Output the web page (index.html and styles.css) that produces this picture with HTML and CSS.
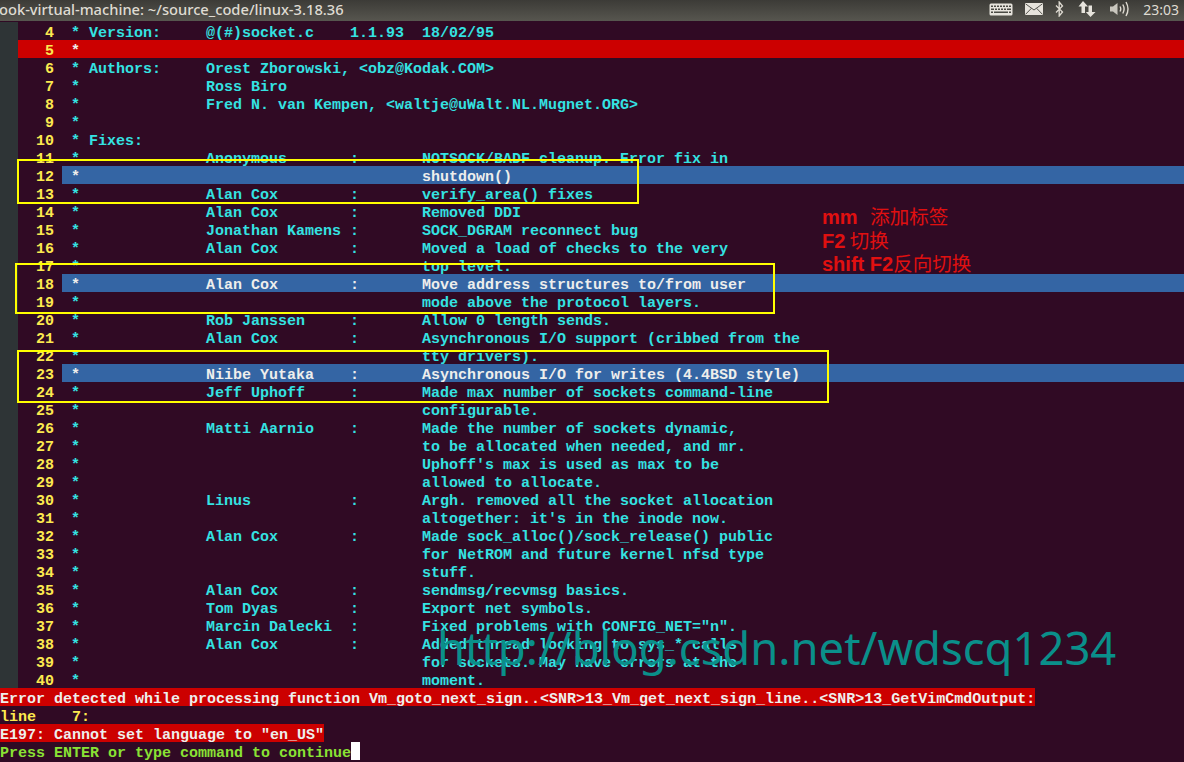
FILE: index.html
```html
<!DOCTYPE html>
<html lang="en">
<head>
<meta charset="utf-8">
<title>vim</title>
<link rel="stylesheet" href="styles.css">
</head>
<body>
<header class="topbar">
  <div class="title">ook-virtual-machine: ~/source_code/linux-3.18.36</div>
  <div class="tray">
    <svg class="ico" width="24" height="13" viewBox="0 0 24 13"><rect x="0.5" y="0.5" width="23" height="12" rx="1.5" fill="#e6e3dc"/><g fill="#4a4a44"><rect x="2" y="2.5" width="2" height="1.5"/><rect x="5" y="2.5" width="2" height="1.5"/><rect x="8" y="2.5" width="2" height="1.5"/><rect x="11" y="2.5" width="2" height="1.5"/><rect x="14" y="2.5" width="2" height="1.5"/><rect x="17" y="2.5" width="2" height="1.5"/><rect x="20" y="2.5" width="2" height="1.5"/><rect x="2" y="5.5" width="3" height="1.5"/><rect x="6" y="5.5" width="2" height="1.5"/><rect x="9" y="5.5" width="2" height="1.5"/><rect x="12" y="5.5" width="2" height="1.5"/><rect x="15" y="5.5" width="2" height="1.5"/><rect x="18" y="5.5" width="4" height="1.5"/><rect x="2" y="8.5" width="2" height="1.5"/><rect x="5" y="8.5" width="14" height="1.5"/><rect x="20" y="8.5" width="2" height="1.5"/></g></svg>
    <svg class="ico mail" width="18" height="12" viewBox="0 0 18 12"><rect x="0" y="0" width="18" height="12" fill="#e6e3dc"/><path d="M0.5 0.8 L9 7 L17.5 0.8 M0.5 11.4 L6.5 5.2 M17.5 11.4 L11.5 5.2" fill="none" stroke="#55544e" stroke-width="1"/></svg>
    <svg class="ico bt" width="9" height="16" viewBox="0 0 9 16"><path d="M1 4.5 L7.5 11 L4.2 15 V1 L7.5 5 L1 11.5" fill="none" stroke="#dfdbd2" stroke-width="1.3"/></svg>
    <svg class="ico net" width="18" height="16" viewBox="0 0 18 16"><path d="M5 0 L10 5.5 H7 V12 H3.5 V5.5 H0.5 Z M10.5 4.5 H14 V11 H17.5 L12.5 16 L7.8 11 H10.5 Z" fill="#e6e3dc"/></svg>
    <svg class="ico vol" width="20" height="16" viewBox="0 0 20 16"><path d="M0 5.5 H3 L7.5 2 V14 L3 10.5 H0 Z" fill="#c9c6be"/><path d="M10 5.5 Q11.5 8 10 10.5 M12.8 3.5 Q15.4 8 12.8 12.5 M16 1 Q20 8 16 15" fill="none" stroke="#dfdbd2" stroke-width="1.4"/></svg>
    <span class="clock">23:03</span>
  </div>
</header>

<main class="editor">
  <div class="row"><span class="sign"></span><span class="num">4</span><span class="code"> * Version:     @(#)socket.c    1.1.93  18/02/95</span></div>
  <div class="row red"><span class="sign"></span><span class="num">5</span><span class="code"> *</span></div>
  <div class="row"><span class="sign"></span><span class="num">6</span><span class="code"> * Authors:     Orest Zborowski, &lt;obz@Kodak.COM&gt;</span></div>
  <div class="row"><span class="sign"></span><span class="num">7</span><span class="code"> *              Ross Biro</span></div>
  <div class="row"><span class="sign"></span><span class="num">8</span><span class="code"> *              Fred N. van Kempen, &lt;waltje@uWalt.NL.Mugnet.ORG&gt;</span></div>
  <div class="row"><span class="sign"></span><span class="num">9</span><span class="code"> *</span></div>
  <div class="row"><span class="sign"></span><span class="num">10</span><span class="code"> * Fixes:</span></div>
  <div class="row"><span class="sign"></span><span class="num">11</span><span class="code"> *              Anonymous       :       NOTSOCK/BADF cleanup. Error fix in</span></div>
  <div class="row blue"><span class="sign"></span><span class="num">12</span><span class="code"> *                                      shutdown()</span></div>
  <div class="row"><span class="sign"></span><span class="num">13</span><span class="code"> *              Alan Cox        :       verify_area() fixes</span></div>
  <div class="row"><span class="sign"></span><span class="num">14</span><span class="code"> *              Alan Cox        :       Removed DDI</span></div>
  <div class="row"><span class="sign"></span><span class="num">15</span><span class="code"> *              Jonathan Kamens :       SOCK_DGRAM reconnect bug</span></div>
  <div class="row"><span class="sign"></span><span class="num">16</span><span class="code"> *              Alan Cox        :       Moved a load of checks to the very</span></div>
  <div class="row"><span class="sign"></span><span class="num">17</span><span class="code"> *                                      top level.</span></div>
  <div class="row blue"><span class="sign"></span><span class="num">18</span><span class="code"> *              Alan Cox        :       Move address structures to/from user</span></div>
  <div class="row"><span class="sign"></span><span class="num">19</span><span class="code"> *                                      mode above the protocol layers.</span></div>
  <div class="row"><span class="sign"></span><span class="num">20</span><span class="code"> *              Rob Janssen     :       Allow 0 length sends.</span></div>
  <div class="row"><span class="sign"></span><span class="num">21</span><span class="code"> *              Alan Cox        :       Asynchronous I/O support (cribbed from the</span></div>
  <div class="row"><span class="sign"></span><span class="num">22</span><span class="code"> *                                      tty drivers).</span></div>
  <div class="row blue"><span class="sign"></span><span class="num">23</span><span class="code"> *              Niibe Yutaka    :       Asynchronous I/O for writes (4.4BSD style)</span></div>
  <div class="row"><span class="sign"></span><span class="num">24</span><span class="code"> *              Jeff Uphoff     :       Made max number of sockets command-line</span></div>
  <div class="row"><span class="sign"></span><span class="num">25</span><span class="code"> *                                      configurable.</span></div>
  <div class="row"><span class="sign"></span><span class="num">26</span><span class="code"> *              Matti Aarnio    :       Made the number of sockets dynamic,</span></div>
  <div class="row"><span class="sign"></span><span class="num">27</span><span class="code"> *                                      to be allocated when needed, and mr.</span></div>
  <div class="row"><span class="sign"></span><span class="num">28</span><span class="code"> *                                      Uphoff's max is used as max to be</span></div>
  <div class="row"><span class="sign"></span><span class="num">29</span><span class="code"> *                                      allowed to allocate.</span></div>
  <div class="row"><span class="sign"></span><span class="num">30</span><span class="code"> *              Linus           :       Argh. removed all the socket allocation</span></div>
  <div class="row"><span class="sign"></span><span class="num">31</span><span class="code"> *                                      altogether: it's in the inode now.</span></div>
  <div class="row"><span class="sign"></span><span class="num">32</span><span class="code"> *              Alan Cox        :       Made sock_alloc()/sock_release() public</span></div>
  <div class="row"><span class="sign"></span><span class="num">33</span><span class="code"> *                                      for NetROM and future kernel nfsd type</span></div>
  <div class="row"><span class="sign"></span><span class="num">34</span><span class="code"> *                                      stuff.</span></div>
  <div class="row"><span class="sign"></span><span class="num">35</span><span class="code"> *              Alan Cox        :       sendmsg/recvmsg basics.</span></div>
  <div class="row"><span class="sign"></span><span class="num">36</span><span class="code"> *              Tom Dyas        :       Export net symbols.</span></div>
  <div class="row"><span class="sign"></span><span class="num">37</span><span class="code"> *              Marcin Dalecki  :       Fixed problems with CONFIG_NET="n".</span></div>
  <div class="row"><span class="sign"></span><span class="num">38</span><span class="code"> *              Alan Cox        :       Added thread locking to sys_* calls</span></div>
  <div class="row"><span class="sign"></span><span class="num">39</span><span class="code"> *                                      for sockets. May have errors at the</span></div>
  <div class="row"><span class="sign"></span><span class="num">40</span><span class="code"> *                                      moment.</span></div>
  <div class="msg"><span class="error">Error detected while processing function Vm_goto_next_sign..&lt;SNR&gt;13_Vm_get_next_sign_line..&lt;SNR&gt;13_GetVimCmdOutput:</span></div>
  <div class="msg linenr">line    7:</div>
  <div class="msg"><span class="error">E197: Cannot set language to "en_US"</span></div>
  <div class="msg prompt">Press ENTER or type command to continue<span class="cursor"></span></div>
</main>

<div class="box box1"></div>
<div class="box box2"></div>
<div class="box box3"></div>
<div class="note">
  <div class="note-line"><b class="wide">mm</b>&nbsp;&nbsp;添加标签</div>
  <div class="note-line"><b>F2</b> 切换</div>
  <div class="note-line"><b>shift F2</b>反向切换</div>
</div>
<div class="watermark">http://blog.csdn.net/wdscq1234</div>
</body>
</html>
```
FILE: styles.css
```css
html, body {
  margin: 0;
  padding: 0;
}
body {
  width: 1184px;
  height: 762px;
  overflow: hidden;
  background: #300a24;
  position: relative;
}
.topbar {
  height: 21px;
  margin-bottom: 1px;
  box-sizing: border-box;
  padding-bottom: 3px;
  display: flex;
  justify-content: space-between;
  align-items: center;
  background: linear-gradient(#3c3b37, #57564f);
  color: #dfdbd2;
  font-family: "Noto Sans", sans-serif;
}
.title {
  font-size: 14.7px;
  font-weight: 500;
  white-space: pre;
  margin-left: -1px;
}
.tray {
  display: flex;
  align-items: center;
}
.ico {
  display: block;
  margin-right: 12px;
}
.bt { margin-right: 13px; }
.net { margin-left: 1px; margin-right: 14px; }
.vol { margin-right: 13px; }
.clock {
  font-size: 14px;
  margin-right: 5px;
  color: #dfdbd2;
}
.editor {
  font-family: "Liberation Mono", monospace;
  font-size: 15px;
  font-weight: bold;
  line-height: 24px;
  color: #34e2e2;
}
.row {
  display: flex;
  height: 18px;
  white-space: pre;
}
.sign {
  width: 18px;
  background: #2e3436;
  flex: none;
}
.num {
  width: 36px;
  padding-right: 8px;
  text-align: right;
  color: #fce94f;
  font-weight: bold;
  flex: none;
}
.code {
  flex: 1;
}
.red .num,
.red .code {
  background: #cc0000;
  color: #eeeeec;
}
.red .num { color: #fce94f; }
.blue .code {
  background: #3465a4;
  color: #eeeeec;
}
.msg {
  height: 18px;
  white-space: pre;
}
.error {
  display: block;
  width: fit-content;
  height: 18px;
  background: #cc0000;
  color: #eeeeec;
}
.linenr { color: #fce94f; }
.prompt { color: #8ae234; }
.cursor {
  display: inline-block;
  width: 9px;
  height: 18px;
  background: #ffffff;
  vertical-align: top;
}
.box {
  position: absolute;
  border: 2px solid #ffff00;
  box-sizing: border-box;
}
.box1 { left: 17px; top: 159px; width: 622px; height: 45px; }
.box2 { left: 15px; top: 263px; width: 760px; height: 51px; }
.box3 { left: 17px; top: 350px; width: 812px; height: 53px; }
.note {
  position: absolute;
  left: 822px;
  top: 205px;
  color: #e01010;
  font-family: "Noto Sans CJK SC", "Liberation Sans", sans-serif;
  font-size: 19.5px;
  line-height: 22.5px;
}
.note-line b {
  font-family: "Liberation Sans", sans-serif;
  font-size: 20px;
}
.note-line .wide {
  margin-right: 4px;
}
.watermark {
  position: absolute;
  left: 437px;
  top: 619px;
  font-family: "Noto Sans", sans-serif;
  font-size: 45.4px;
  line-height: 56px;
  color: #0a8f8a;
  white-space: pre;
}
```
